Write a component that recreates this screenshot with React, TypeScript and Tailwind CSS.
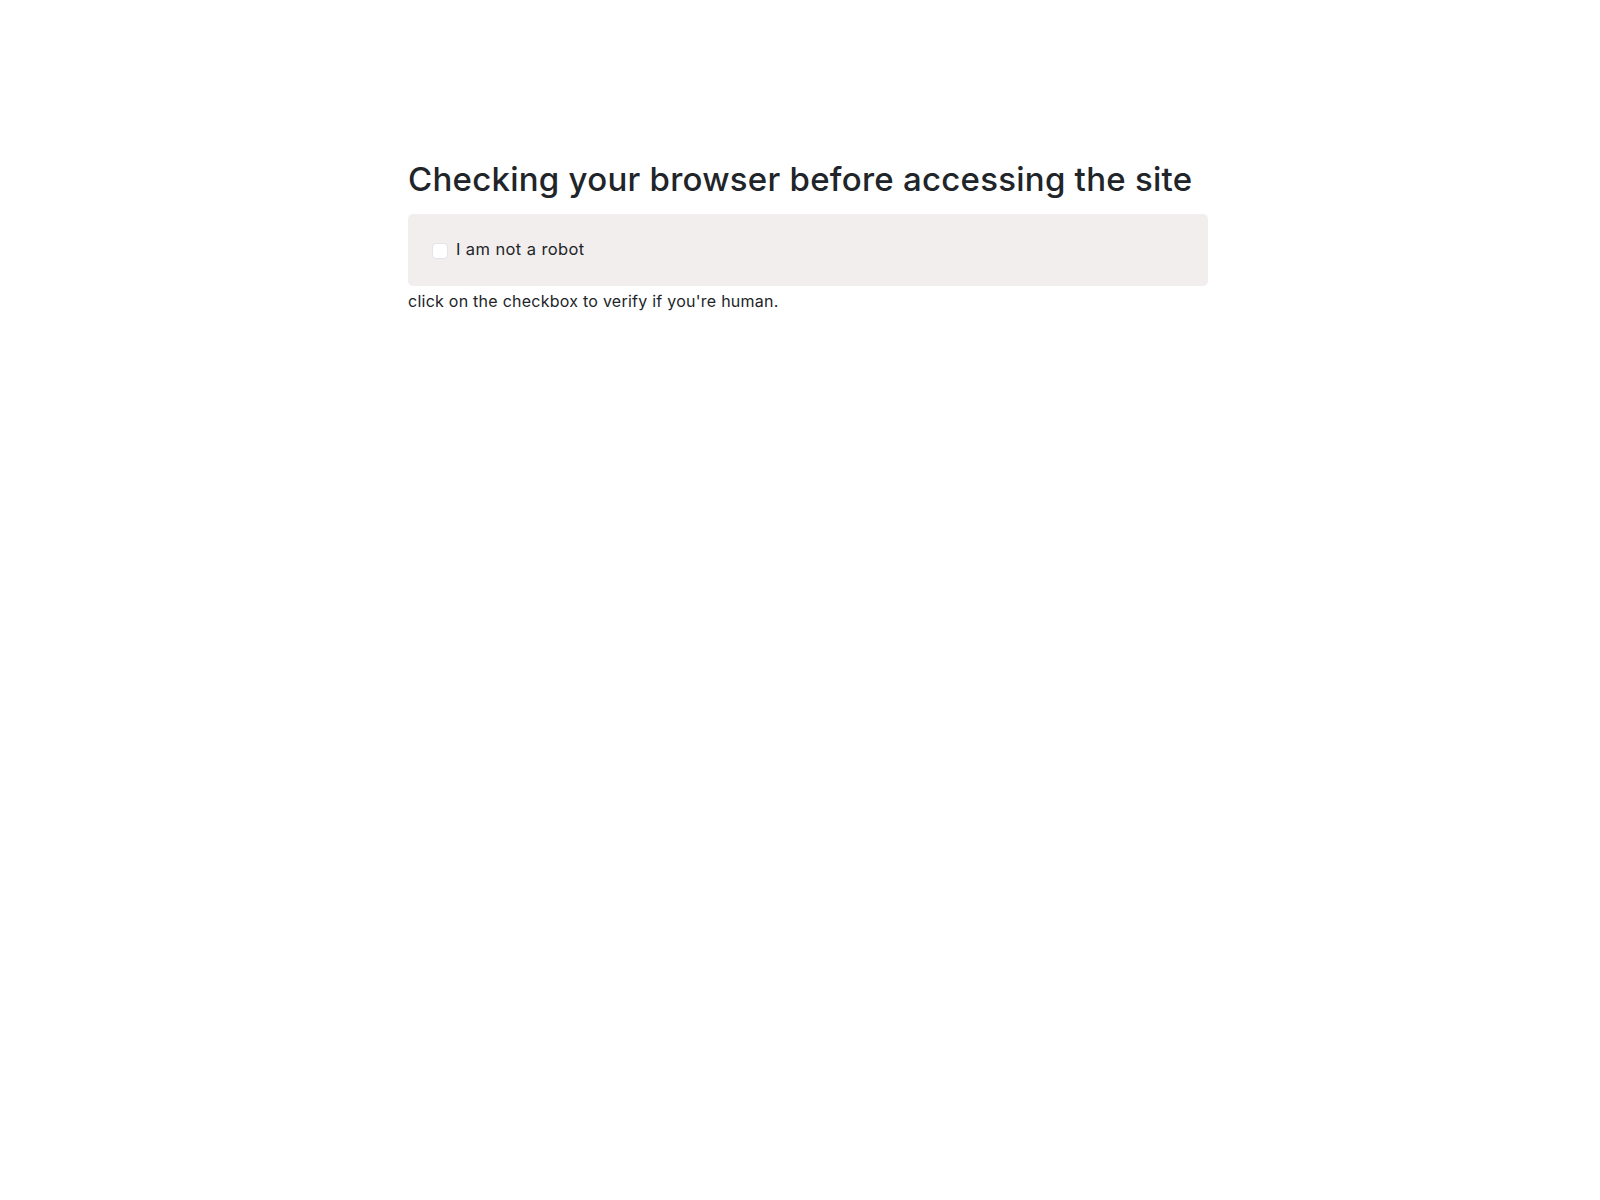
export default function App() {
  return (
    <div className="min-h-screen bg-white pl-4 pt-[160px] text-[#212529]" style={{ fontFamily: 'Inter, "Noto Sans", sans-serif' }}>
      <div className="mx-auto w-[800px]">
        <h1 className="mb-[14px] text-[33px] font-medium leading-[1.2] tracking-[0.25px]">
          Checking your browser before accessing the site
        </h1>
        <div className="flex h-[72px] items-center rounded-[5px] bg-[#f2eeee] px-6">
          <label className="flex items-center gap-2 text-[16.5px] tracking-[0.4px]">
            <span className="mt-[2px] h-[16px] w-[16px] rounded-[4px] border border-[#e4e4ea] bg-white" />
            I am not a robot
          </label>
        </div>
        <p className="mt-[3px] text-[16px] leading-[1.5] tracking-[0.25px]">click on the checkbox to verify if you're human.</p>
      </div>
    </div>
  );
}
